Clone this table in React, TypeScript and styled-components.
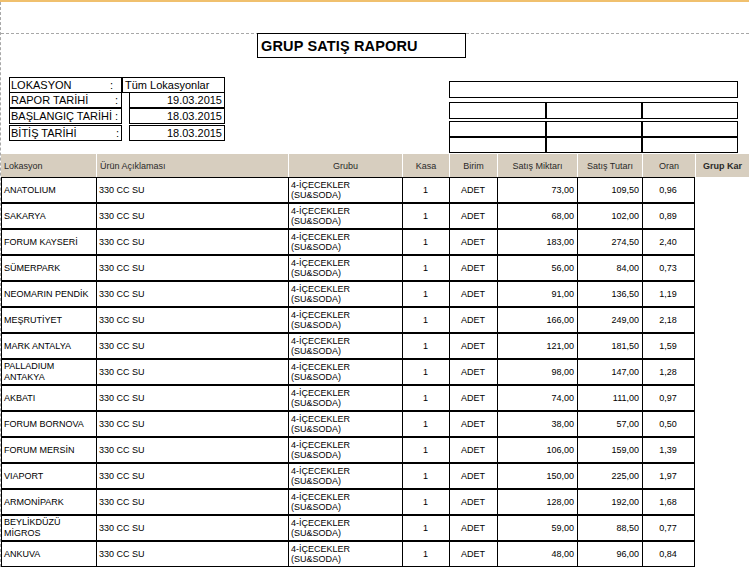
import React from "react";
import styled, { createGlobalStyle } from "styled-components";

const GlobalStyle = createGlobalStyle`
  html, body {
    margin: 0;
    padding: 0;
    background: #ffffff;
    overflow: hidden;
  }
  body {
    font-family: "Liberation Sans", Arial, sans-serif;
    color: #000;
  }
  * { box-sizing: border-box; }
`;

const COLS = "95px 192px 114px 47px 48px 80px 65px 53px";

const TopBar = styled.div`
  height: 2px;
  background: #f0c06e;
`;

const Page = styled.div`
  height: 565px;
  border-left: 1px dashed #a8a8a8;
  overflow: hidden;
`;

const Band = styled.div`
  height: 32px;
  border-bottom: 1px dashed #a8a8a8;
`;

const TitleBox = styled.div`
  margin: -1px 0 0 256px;
  width: 209px;
  height: 25px;
  border: 1px solid #000;
  display: flex;
  align-items: center;
  padding-left: 3px;
  font-size: 14.5px;
  font-weight: bold;
  letter-spacing: 0.15px;
`;

const InfoArea = styled.div`
  margin-top: 19px;
  display: flex;
  justify-content: space-between;
  align-items: flex-start;
  padding: 0 11px 0 8px;
`;

const LeftInfo = styled.div`
  display: flex;
  flex-direction: column;
`;

const InfoRow = styled.div<{ $offset: number }>`
  display: flex;
  margin-top: ${(p) => p.$offset}px;
`;

const LabelBox = styled.div<{ $colonPad: number }>`
  width: 113px;
  height: 16px;
  border: 1px solid #000;
  display: flex;
  align-items: center;
  justify-content: space-between;
  padding: 0 ${(p) => p.$colonPad}px 0 1px;
  font-size: 11px;
  white-space: nowrap;
`;

const ValueBox = styled.div<{ $gap: number; $w: number; $align: string }>`
  margin-left: ${(p) => p.$gap}px;
  width: ${(p) => p.$w}px;
  height: 16px;
  border: 1px solid #000;
  display: flex;
  align-items: center;
  justify-content: ${(p) => p.$align};
  padding: 0 2px 0 2px;
  font-size: 11px;
  white-space: nowrap;
`;

const RightPanel = styled.div`
  margin-top: 4px;
  width: 289px;
  display: flex;
  flex-direction: column;
`;

const WideBox = styled.div`
  height: 17px;
  border: 1px solid #000;
`;

const BoxRow = styled.div<{ $offset: number; $h: number }>`
  margin-top: ${(p) => p.$offset}px;
  display: grid;
  grid-template-columns: 97px 96px 96px;
  height: ${(p) => p.$h}px;
`;

const EmptyBox = styled.div`
  border: 1px solid #000;
`;

const HeaderRow = styled.div`
  margin-top: 1px;
  display: grid;
  grid-template-columns: ${COLS} 1fr;
  height: 23px;
  background: #d7cebf;
`;

const HeadCell = styled.div<{ $align: string; $first?: boolean; $bold?: boolean }>`
  border-left: ${(p) => (p.$first ? "none" : "1px solid #ffffff")};
  display: flex;
  align-items: center;
  justify-content: ${(p) => p.$align};
  padding: 0 3px;
  font-size: 9px;
  color: #2a2a2a;
  font-weight: ${(p) => (p.$bold ? "bold" : "normal")};
  white-space: nowrap;
`;

const DataRow = styled.div`
  display: grid;
  grid-template-columns: ${COLS};
  width: 694px;
  height: 26px;
  border-top: 1px solid #000;
  border-bottom: 1px solid #000;
`;

const Cell = styled.div<{ $align: string; $last?: boolean; $lh?: number }>`
  border-left: 1px solid #000;
  border-right: ${(p) => (p.$last ? "1px solid #000" : "none")};
  display: flex;
  align-items: center;
  justify-content: ${(p) => p.$align};
  text-align: ${(p) => (p.$align === "flex-end" ? "right" : p.$align === "center" ? "center" : "left")};
  padding: 0 3px 0 2px;
  font-size: 9px;
  line-height: ${(p) => p.$lh ?? 11}px;
  overflow: hidden;
`;

const rows: [string, string, string, string][] = [
  ["ANATOLIUM", "73,00", "109,50", "0,96"],
  ["SAKARYA", "68,00", "102,00", "0,89"],
  ["FORUM KAYSERİ", "183,00", "274,50", "2,40"],
  ["SÜMERPARK", "56,00", "84,00", "0,73"],
  ["NEOMARIN PENDİK", "91,00", "136,50", "1,19"],
  ["MEŞRUTİYET", "166,00", "249,00", "2,18"],
  ["MARK ANTALYA", "121,00", "181,50", "1,59"],
  ["PALLADIUM ANTAKYA", "98,00", "147,00", "1,28"],
  ["AKBATI", "74,00", "111,00", "0,97"],
  ["FORUM BORNOVA", "38,00", "57,00", "0,50"],
  ["FORUM MERSİN", "106,00", "159,00", "1,39"],
  ["VIAPORT", "150,00", "225,00", "1,97"],
  ["ARMONİPARK", "128,00", "192,00", "1,68"],
  ["BEYLİKDÜZÜ MİGROS", "59,00", "88,50", "0,77"],
  ["ANKUVA", "48,00", "96,00", "0,84"],
];

const info = [
  { label: "LOKASYON", value: "Tüm Lokasyonlar", offset: 0, colonPad: 8, gap: 0, w: 103, align: "flex-start" },
  { label: "RAPOR TARİHİ", value: "19.03.2015", offset: -1, colonPad: 3, gap: 7, w: 96, align: "flex-end" },
  { label: "BAŞLANGIÇ TARİHİ", value: "18.03.2015", offset: 0, colonPad: 3, gap: 7, w: 96, align: "flex-end" },
  { label: "BİTİŞ TARİHİ", value: "18.03.2015", offset: 1, colonPad: 2, gap: 7, w: 96, align: "flex-end" },
];

const headers: { t: string; a: string; bold?: boolean }[] = [
  { t: "Lokasyon", a: "flex-start" },
  { t: "Ürün Açıklaması", a: "flex-start" },
  { t: "Grubu", a: "center" },
  { t: "Kasa", a: "center" },
  { t: "Birim", a: "center" },
  { t: "Satış Miktarı", a: "center" },
  { t: "Satış Tutarı", a: "center" },
  { t: "Oran", a: "center" },
  { t: "Grup Kar", a: "center", bold: true },
];

export default function App() {
  return (
    <>
      <GlobalStyle />
      <TopBar />
      <Page>
        <Band />
        <TitleBox>GRUP SATIŞ RAPORU</TitleBox>
        <InfoArea>
          <LeftInfo>
            {info.map((r) => (
              <InfoRow key={r.label} $offset={r.offset}>
                <LabelBox $colonPad={r.colonPad}>
                  <span>{r.label}</span>
                  <span>:</span>
                </LabelBox>
                <ValueBox $gap={r.gap} $w={r.w} $align={r.align}>
                  {r.value}
                </ValueBox>
              </InfoRow>
            ))}
          </LeftInfo>
          <RightPanel>
            <WideBox />
            <BoxRow $offset={4} $h={17}>
              <EmptyBox />
              <EmptyBox />
              <EmptyBox />
            </BoxRow>
            <BoxRow $offset={2} $h={16}>
              <EmptyBox />
              <EmptyBox />
              <EmptyBox />
            </BoxRow>
            <BoxRow $offset={0} $h={16}>
              <EmptyBox />
              <EmptyBox />
              <EmptyBox />
            </BoxRow>
          </RightPanel>
        </InfoArea>
        <HeaderRow>
          {headers.map((h, i) => (
            <HeadCell key={h.t} $align={h.a} $first={i === 0} $bold={h.bold}>
              {h.t}
            </HeadCell>
          ))}
        </HeaderRow>
        {rows.map((r) => (
          <DataRow key={r[0]}>
            <Cell $align="flex-start" $lh={11}>{r[0]}</Cell>
            <Cell $align="flex-start">330 CC SU</Cell>
            <Cell $align="flex-start" $lh={10}>
              4-İÇECEKLER
              <br />
              (SU&amp;SODA)
            </Cell>
            <Cell $align="center">1</Cell>
            <Cell $align="center">ADET</Cell>
            <Cell $align="flex-end">{r[1]}</Cell>
            <Cell $align="flex-end">{r[2]}</Cell>
            <Cell $align="center" $last>{r[3]}</Cell>
          </DataRow>
        ))}
      </Page>
    </>
  );
}
